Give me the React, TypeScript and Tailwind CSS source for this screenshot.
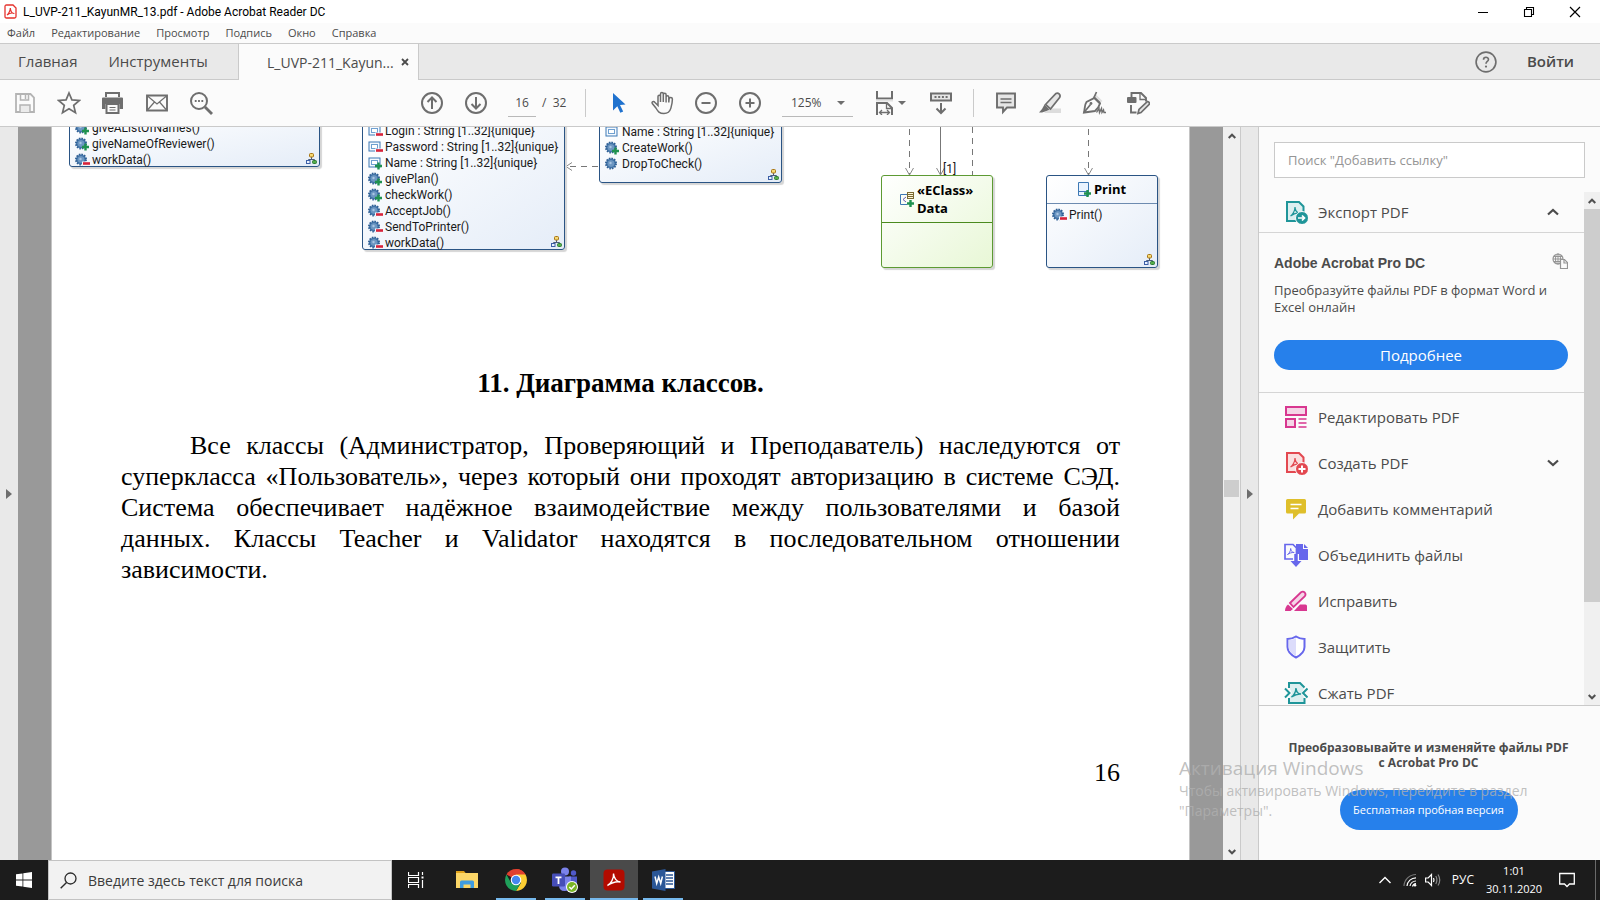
import type { ReactNode } from "react";

const uiFont = "font-['Open_Sans','Noto_Sans',sans-serif]";

type IconProps = { children: ReactNode; size?: string; box?: string };

function Icon({ children, size = "size-6", box = "0 0 24 24" }: IconProps) {
  return (
    <svg
      className={`shrink-0 ${size}`}
      viewBox={box}
      fill="none"
      stroke="currentColor"
      strokeWidth="2"
      aria-hidden="true"
    >
      {children}
    </svg>
  );
}

function TitleBar() {
  return (
    <header className="flex h-[23px] shrink-0 items-center bg-white pl-1 text-black">
      <Icon size="h-[15px] w-[13px]" box="0 0 13 15">
        <path d="M1 2.500Q1 1 2.500 1H9l3 3v8.500q0 1.500-1.500 1.500h-8Q1 14 1 12.500z" fill="#fff" stroke="#e5322d" strokeWidth="1.300" />
        <path d="M3 11c1.500-1 3.500-4.500 3.300-7 .3 3 2 5.500 4 5.500C8 8.500 5 9.500 3 11z" stroke="#e5322d" strokeWidth="1.200" />
      </Icon>
      <h1 className="ml-1.5 font-['Roboto','Open_Sans',sans-serif] text-[12px]">L_UVP-211_KayunMR_13.pdf - Adobe Acrobat Reader DC</h1>
      <div className="mr-0.5 ml-auto flex">
        <button aria-label="Свернуть" className="flex h-5 w-[46px] items-center justify-center">
          <Icon size="size-3" box="0 0 12 12"><path d="M1 6.500h10" strokeWidth="1" /></Icon>
        </button>
        <button aria-label="Восстановить" className="flex h-5 w-[46px] items-center justify-center">
          <Icon size="size-3" box="0 0 12 12">
            <path d="M1.500 3.500h7v7h-7zM3.500 3.500v-2h7v7h-2" strokeWidth="1.100" />
          </Icon>
        </button>
        <button aria-label="Закрыть" className="flex h-5 w-[46px] items-center justify-center">
          <Icon size="size-3" box="0 0 12 12"><path d="M1 1l10 10M11 1L1 11" strokeWidth="1.200" /></Icon>
        </button>
      </div>
    </header>
  );
}

function MenuBar() {
  return (
    <nav className="flex h-[21px] shrink-0 items-center gap-4 border-b border-[#cacaca] bg-[#fbfbfb] pl-[7px] text-[11px] text-[#4b4b4b]">
      {["Файл", "Редактирование", "Просмотр", "Подпись", "Окно", "Справка"].map((item) => (
        <button key={item}>{item}</button>
      ))}
    </nav>
  );
}

function TabBar() {
  return (
    <div className="flex h-9 shrink-0 bg-[#e9e9e9] text-[15px] text-[#4b4b4b]">
      <div className="flex w-[239px] items-center gap-[31px] border-r border-b border-[#cacaca] pl-[18px]">
        <button>Главная</button>
        <button>Инструменты</button>
      </div>
      <div className="flex w-[179px] items-center bg-[#fbfbfb] pl-7">
        <button className="w-[124px] text-left text-[14px] whitespace-nowrap">L_UVP-211_Kayun...</button>
        <button aria-label="Закрыть вкладку" className="ml-2.5">
          <Icon size="size-2" box="0 0 8 8"><path d="M1 1l6 6M7 1L1 7" strokeWidth="1.800" /></Icon>
        </button>
      </div>
      <div className="flex flex-1 items-center justify-end gap-[30px] border-b border-l border-[#cacaca] pr-[26px]">
        <button aria-label="Справка" className="text-[#6e6e6e]">
          <Icon size="size-[22px]">
            <circle cx="12" cy="12" r="10.800" strokeWidth="1.800" />
            <path d="M9.300 9.500c0-3.600 5.400-3.400 5.400-.3 0 2.200-2.700 2.200-2.700 4.600" strokeWidth="1.800" />
            <circle cx="12" cy="17" r="1.200" fill="currentColor" stroke="none" />
          </Icon>
        </button>
        <button className="font-semibold">Войти</button>
      </div>
    </div>
  );
}

function ToolButton({ label, children }: { label: string; children: ReactNode }) {
  return (
    <button aria-label={label} className="flex h-10 w-11 items-center justify-center">
      {children}
    </button>
  );
}

function Divider() {
  return <span className="h-7 w-px bg-[#cacaca]" />;
}

function Toolbar() {
  return (
    <div className="flex h-[47px] shrink-0 items-center border-b border-[#cacaca] bg-[#fbfbfb] pl-[3px] text-[#6e6e6e]">
      <div className="flex">
        <ToolButton label="Сохранить">
          <span className="text-[#b4b4b4]">
            <Icon>
              <path d="M3 3h14.500L21 6.500V21H3z" strokeWidth="1.800" />
              <path d="M7.500 3v6h8V3M12.500 4v4" strokeWidth="1.500" />
              <path d="M7 21v-7h10v7" fill="#ebebeb" strokeWidth="1.500" />
            </Icon>
          </span>
        </ToolButton>
        <ToolButton label="Избранное">
          <Icon>
            <path d="M12 2l2.900 6.900 7.500.6-5.700 4.900 1.800 7.300L12 17.800l-6.500 3.900 1.800-7.300-5.700-4.900 7.500-.6z" strokeWidth="1.700" />
          </Icon>
        </ToolButton>
        <ToolButton label="Печать">
          <Icon>
            <path d="M5 6V2h13v4" strokeWidth="2" />
            <path d="M1 7.500q0-1 1-1h19q1 0 1 1V18h-3.500v-5H4.500v5H1z" fill="currentColor" stroke="none" />
            <path d="M5.500 13h12v9h-12z" fill="#fbfbfb" strokeWidth="2" />
            <path d="M8.500 16.500h6M8.500 19h6" strokeWidth="1.200" />
          </Icon>
        </ToolButton>
        <ToolButton label="Отправить по почте">
          <Icon>
            <path d="M2 4.500h20v15H2z" strokeWidth="1.900" />
            <path d="M2.500 5l9.500 8 9.500-8M2.500 19l7-8M21.500 19l-7-8" strokeWidth="1.200" />
          </Icon>
        </ToolButton>
        <ToolButton label="Найти">
          <Icon>
            <circle cx="10" cy="10" r="8" />
            <path d="M16 16l7 7" strokeWidth="2.800" />
            <path d="M5.800 10h1.800M9.100 10h1.800M12.400 10h1.800" />
          </Icon>
        </ToolButton>
      </div>
      <div className="ml-[187px] flex items-center">
        <ToolButton label="Предыдущая страница">
          <Icon>
            <circle cx="12" cy="12" r="10" />
            <path d="M12 18V7M7.500 11L12 6.500l4.500 4.500" />
          </Icon>
        </ToolButton>
        <ToolButton label="Следующая страница">
          <Icon>
            <circle cx="12" cy="12" r="10" />
            <path d="M12 6v11M7.500 13l4.500 4.500 4.500-4.500" />
          </Icon>
        </ToolButton>
        <input
          aria-label="Номер страницы"
          defaultValue="16"
          className="ml-2.5 h-7 w-7 border-b border-[#b9b9b9] bg-transparent text-center text-[12px] text-[#4b4b4b]"
        />
        <span className="ml-1.5 w-[43px] text-[12px] whitespace-pre text-[#4b4b4b]">/  32</span>
        <Divider />
        <div className="ml-2.5 flex">
          <ToolButton label="Выделение">
            <Icon>
              <path d="M7 2l12.500 11.500-5.500.4 3.200 6.600-2.900 1.300-3-6.600L7 19.500z" fill="#2072ce" stroke="none" />
            </Icon>
          </ToolButton>
          <ToolButton label="Рука">
            <Icon>
              <path d="M8 14.500V5.500q0-1.300 1.200-1.300t1.300 1.300V11 3q0-1.500 1.400-1.500T13.300 3v8V3.700q0-1.400 1.400-1.400t1.400 1.400V11.500 6q0-1.300 1.300-1.300T18.800 6v5.500l.3-3.700q.2-1.300 1.700-1.200t1.600 1.500c0 4-.7 6.400-1.500 9-1 3.400-3.200 5.400-7 5.400-4.500 0-6-2-8-5.500L2.300 12.500q-.7-1.300.5-1.800 1.200-.4 2.200.7z" strokeWidth="1.500" />
            </Icon>
          </ToolButton>
          <ToolButton label="Уменьшить">
            <Icon>
              <circle cx="12" cy="12" r="10" />
              <path d="M7.500 12h9" />
            </Icon>
          </ToolButton>
          <ToolButton label="Увеличить">
            <Icon>
              <circle cx="12" cy="12" r="10" />
              <path d="M7.500 12h9M12 7.500v9" />
            </Icon>
          </ToolButton>
        </div>
        <div className="ml-2.5 flex h-7 w-[71px] items-center border-b border-[#b9b9b9]">
          <select aria-label="Масштаб" className="w-[55px] appearance-none pl-[9px] text-[12px] text-[#4b4b4b]">
            <option>125%</option>
          </select>
          <Icon size="h-1 w-2" box="0 0 8 4"><path d="M0 0h8L4 4z" fill="currentColor" stroke="none" /></Icon>
        </div>
        <button aria-label="По ширине страницы" className="ml-[19px] flex w-9 items-center gap-0.5">
          <Icon>
            <path d="M5 0v7.500h15V0" strokeWidth="2" />
            <path d="M4 8.500h17v2H4z" fill="#e2e2e2" stroke="none" />
            <path d="M5 24V12h10l5 5v7" strokeWidth="2" />
            <path d="M14.500 12v5.500H20" strokeWidth="1.300" />
            <path d="M7.500 21.500h10M10 19l-2.500 2.500L10 24M15 19l2.500 2.500L15 24" strokeWidth="1.300" />
          </Icon>
          <Icon size="h-1 w-2" box="0 0 8 4"><path d="M0 0h8L4 4z" fill="currentColor" stroke="none" /></Icon>
        </button>
        <div className="ml-[11px]">
          <ToolButton label="Режим чтения">
            <Icon>
              <path d="M2 2.500h20v7H2z" fill="#e6e6e6" />
              <path d="M5.500 6h2M9.200 6h2M12.900 6h2M16.600 6h2M12 12v10M7.500 17.500l4.500 4.500 4.500-4.500" />
            </Icon>
          </ToolButton>
        </div>
        <span className="w-2.5" />
        <Divider />
        <div className="ml-2.5 flex">
          <ToolButton label="Комментарий">
            <Icon>
              <path d="M3 2.500h18v14h-8l-4 4.500v-4.500H3z" fill="#e6e6e6" strokeWidth="1.900" />
              <path d="M6.500 8h11M6.500 11.500h11" strokeWidth="1.500" />
            </Icon>
          </ToolButton>
          <ToolButton label="Маркер">
            <Icon>
              <path d="M12 17.500h11V22H6z" fill="#dcdcdc" stroke="none" />
              <path d="M7.500 13.500L17.500 2.800q2-1.300 3.600 0 1.700 1.500.5 3.800L12.500 18z" fill="#e6e6e6" strokeWidth="1.700" />
              <path d="M6.500 13.500l5 5-3 1.500-4.500 1.500H1l3-3.500z" fill="currentColor" stroke="none" />
            </Icon>
          </ToolButton>
          <ToolButton label="Подписать">
            <Icon>
              <path d="M13.500 3l7 7-3 2.500-7-6.500z" fill="#e0e0e0" stroke="none" />
              <path d="M2 21.500C3 17.500 2.500 13.500 4.500 11l8-4 5.500 5.500c-1 3.500-2.500 5.500-5 7.500z" strokeWidth="1.900" />
              <path d="M14.500 1l-2.500 5.500 6 5.500M2 21.500l6.500-8" strokeWidth="1.700" />
              <circle cx="9" cy="12.500" r="1.400" fill="currentColor" stroke="none" />
              <path d="M14.500 21.500l2.500-4 .5 4 2-4 .5 4 1.500-2.500.5 2.500h2" strokeWidth="1.400" />
            </Icon>
          </ToolButton>
          <ToolButton label="Дополнительные инструменты">
            <Icon>
              <path d="M5.500 7V2h9.500l5 5v3.500M5 14v7.500h5.500" strokeWidth="1.900" />
              <path d="M14 2v6.500h6" strokeWidth="1.300" />
              <rect x="1" y="6" width="9.500" height="6" rx="1" fill="currentColor" stroke="none" />
              <path d="M12 22.500l1-4 8.500-8q2 .5 2 2.500L15 21.500z" fill="#e6e6e6" strokeWidth="1.700" />
            </Icon>
          </ToolButton>
        </div>
      </div>
    </div>
  );
}

type Member = { kind: "attr" | "op"; badge?: "plus" | "minus"; text: string };

function MemberIcon({ kind, badge }: { kind: "attr" | "op"; badge?: "plus" | "minus" }) {
  return (
    <svg className="h-[14px] w-[15px] shrink-0" viewBox="0 0 15 14" fill="none" aria-hidden="true">
      {kind === "op" ? (
        <>
          <circle cx="6" cy="6.500" r="5" fill="#5b87b5" stroke="#2f5f94" strokeWidth="2" strokeDasharray="1.500 1.100" />
          <circle cx="6" cy="6.500" r="4" fill="#6d97c2" stroke="#34689f" strokeWidth="0.800" />
          <circle cx="5.500" cy="6" r="1.200" fill="#a9c6e3" />
        </>
      ) : (
        <>
          <rect x="1" y="2" width="11" height="9" fill="#f4f9ff" stroke="#3d78b4" />
          <rect x="3.500" y="4.500" width="6" height="4" fill="#fff" stroke="#6fa0d0" />
        </>
      )}
      {badge === "plus" && <path d="M10.500 6.500v7M7 10h7" stroke="#1f9150" strokeWidth="2.400" />}
      {badge === "minus" && (
        <>
          <path d="M7 8.500h8v4H7z" fill="#f6f9ff" />
          <path d="M8 10.500h7" stroke="#d8233a" strokeWidth="2.600" />
        </>
      )}
    </svg>
  );
}

function NodeCorner() {
  return (
    <svg className="absolute right-0.5 bottom-0.5 size-[11px]" viewBox="0 0 11 11" fill="none" aria-hidden="true">
      <path d="M5.500 4v2.500M2.500 8V6.500h6V8" stroke="#4a5c7a" />
      <rect x="3.500" y="0.500" width="4" height="3.500" rx="1" fill="#f5d873" stroke="#a87514" />
      <rect x="0.500" y="7.500" width="3.500" height="3" fill="#eaf2ff" stroke="#3c5fa6" />
      <rect x="6.500" y="7.500" width="4" height="3" rx="1" fill="#55ad4a" stroke="#2c7a35" />
    </svg>
  );
}

function Members({ items }: { items: Member[] }) {
  return (
    <ul className="flex flex-col">
      {items.map((m) => (
        <li key={m.text} className="flex h-4 items-center gap-0.5 whitespace-nowrap">
          <MemberIcon kind={m.kind} badge={m.badge} />
          {m.text}
        </li>
      ))}
    </ul>
  );
}

const blueNode =
  "absolute flex flex-col rounded-b-[3px] border border-[#2a5484] bg-linear-to-br from-white to-[#e5edf8] pl-[5px] shadow-[2px_2px_1px_#d5d5d5]";

function ClassDiagram() {
  return (
    <figure
      aria-label="Диаграмма классов"
      className="relative -ml-px h-[160px] overflow-hidden font-['Roboto','Open_Sans',sans-serif] text-[12px] text-[#1a1a1a]"
    >
      <svg className="absolute top-0 left-0 h-[160px] w-[1137px]" viewBox="0 0 1137 160" fill="none" stroke="#777" aria-hidden="true">
        <path d="M889.500 0v48" />
        <path d="M858.500 2v46M921.500 0v48M1037.500 2v46M547 39.500H516" strokeDasharray="6 5" />
        <path d="M854.500 41l4 7 4-7M885.500 41l4 7 4-7M1033.500 41l4 7 4-7M521 35.500l-6 4 6 4" stroke="#888" />
      </svg>
      <div className={`${blueNode} -top-2 left-[18px] h-12 w-[251px]`}>
        <Members
          items={[
            { kind: "op", badge: "plus", text: "giveAListOfNames()" },
            { kind: "op", badge: "plus", text: "giveNameOfReviewer()" },
            { kind: "op", badge: "minus", text: "workData()" },
          ]}
        />
        <NodeCorner />
      </div>
      <div className={`${blueNode} -top-[5px] left-[311px] h-32 w-[203px]`}>
        <Members
          items={[
            { kind: "attr", badge: "minus", text: "Login : String [1..32]{unique}" },
            { kind: "attr", badge: "minus", text: "Password : String [1..32]{unique}" },
            { kind: "attr", badge: "plus", text: "Name : String [1..32]{unique}" },
            { kind: "op", badge: "plus", text: "givePlan()" },
            { kind: "op", badge: "plus", text: "checkWork()" },
            { kind: "op", badge: "minus", text: "AcceptJob()" },
            { kind: "op", badge: "minus", text: "SendToPrinter()" },
            { kind: "op", badge: "minus", text: "workData()" },
          ]}
        />
        <NodeCorner />
      </div>
      <div className={`${blueNode} -top-1 left-[548px] h-[60px] w-[183px]`}>
        <Members
          items={[
            { kind: "attr", text: "Name : String [1..32]{unique}" },
            { kind: "op", badge: "plus", text: "CreateWork()" },
            { kind: "op", text: "DropToCheck()" },
          ]}
        />
        <NodeCorner />
      </div>
      <span className="absolute top-[34px] left-[892px] leading-4">[1]</span>
      <div className="absolute top-12 left-[830px] flex h-[93px] w-[112px] flex-col rounded-[3px] border border-[#5d9a33] bg-linear-to-br from-white to-[#e8f7d6] shadow-[2px_2px_1px_#d5d5d5]">
        <div className="flex h-[47px] items-center gap-[3px] border-b border-[#4a8a1e] pl-[18px] font-['Open_Sans',sans-serif] text-[13px] leading-[18px] font-bold text-black">
          <svg className="h-4 w-[14px] shrink-0" viewBox="0 0 14 16" fill="none" aria-hidden="true">
            <path d="M7 3.500H.5v10H7" stroke="#3d78b4" />
            <path d="M6 6L3 8.500 6 11" stroke="#6b5db0" />
            <rect x="7.500" y="1.500" width="6" height="6" fill="#fff8dc" stroke="#7a6a32" />
            <path d="M8 3.500h5M8 5.500h5" stroke="#7a6a32" />
            <path d="M10.500 9v7M7 12.500h7" stroke="#1f9150" strokeWidth="2.400" />
          </svg>
          <p>«EClass»<br />Data</p>
        </div>
      </div>
      <div className="absolute top-12 left-[995px] flex h-[93px] w-[112px] flex-col rounded-[3px] border border-[#2a5484] bg-linear-to-br from-white to-[#e5edf8] shadow-[2px_2px_1px_#d5d5d5]">
        <div className="flex h-7 items-center justify-center gap-[3px] border-b border-[#6d8bb0] pr-px font-['Open_Sans',sans-serif] text-[13px] font-bold text-black">
          <svg className="h-[15px] w-[14px] shrink-0" viewBox="0 0 14 15" fill="none" aria-hidden="true">
            <path d="M1.500.5h10v13h-10zM1.500 9.500h10" fill="#e9f3ff" stroke="#3d78b4" />
            <path d="M10.500 8v7M7 11.500h7" stroke="#1f9150" strokeWidth="2.400" />
          </svg>
          Print
        </div>
        <div className="pt-[3px] pl-[5px]">
          <Members items={[{ kind: "op", badge: "minus", text: "Print()" }]} />
        </div>
        <NodeCorner />
      </div>
    </figure>
  );
}

const bodyLines = [
  "суперкласса «Пользователь», через который они проходят авторизацию в системе СЭД.",
  "Система обеспечивает надёжное взаимодействие между пользователями и базой",
  "данных. Классы Teacher и Validator находятся в последовательном отношении",
];

function DocumentPage() {
  return (
    <article className="mx-[33px] min-w-0 flex-1 border-x border-[#c4c4c4] bg-white">
      <ClassDiagram />
      <div className="pr-[69px] pl-[69px] font-['Liberation_Serif',serif] text-[26px] leading-[31px] text-black">
        <h2 className="mt-[81px] text-center text-[27px] font-bold">11. Диаграмма классов.</h2>
        <div className="mt-[31px] whitespace-nowrap [text-align-last:justify]">
          <p className="pl-[69px]">Все классы (Администратор, Проверяющий и Преподаватель) наследуются от</p>
          {bodyLines.map((line) => (
            <p key={line}>{line}</p>
          ))}
        </div>
        <p>зависимости.</p>
        <p className="mt-[172px] text-right">16</p>
      </div>
    </article>
  );
}

function ScrollArrow({ up = false }: { up?: boolean }) {
  return (
    <button aria-label={up ? "Прокрутить вверх" : "Прокрутить вниз"} className="flex h-[17px] w-full items-center justify-center text-[#505050]">
      <Icon size="h-1.5 w-2" box="0 0 8 6">
        <path d={up ? "M.7 5L4 1.700 7.300 5" : "M.7 1L4 4.300 7.300 1"} />
      </Icon>
    </button>
  );
}

function DocumentScrollbar() {
  return (
    <div className="flex w-[17px] shrink-0 flex-col bg-[#f0f0f0] px-px">
      <ScrollArrow up />
      <div className="h-[336px]" />
      <div className="h-[17px] bg-[#cdcdcd]" />
      <div className="flex-1" />
      <ScrollArrow />
    </div>
  );
}

function PdfGlyph({ tint, children }: { tint: string; children?: ReactNode }) {
  return (
    <>
      <path d="M3 2h12l4.500 4.500V21H3z" fill={tint} />
      <path d="M6.500 16c2-1 4.500-5 4.500-9 .2 3.500 2 6 5 6-4-.5-6.500 1-9.500 3z" strokeWidth="1.200" />
      {children}
    </>
  );
}

const tools: { label: string; color: string; icon: ReactNode; chevron?: boolean }[] = [
  {
    label: "Редактировать PDF",
    color: "text-[#d83790]",
    icon: (
      <>
        <path d="M2 2h20v8H2zM2 14h9v8H2z" fill="#f5d5e7" />
        <path d="M14.500 14h8M14.500 18h8M14.500 22h8" strokeWidth="1.300" />
      </>
    ),
  },
  {
    label: "Создать PDF",
    color: "text-[#e34850]",
    chevron: true,
    icon: (
      <PdfGlyph tint="#fae0e0">
        <circle cx="18" cy="18" r="6.500" fill="currentColor" stroke="#fbfbfb" strokeWidth="1" />
        <path d="M14.500 18h7M18 14.500v7" stroke="#fff" />
      </PdfGlyph>
    ),
  },
  {
    label: "Добавить комментарий",
    color: "text-[#dfbf2b]",
    icon: (
      <>
        <path d="M3.500 2h17q1.500 0 1.500 1.500v11.500q0 1.500-1.500 1.500H15L9 22.500v-6H3.500Q2 16.500 2 15V3.500Q2 2 3.500 2z" fill="currentColor" stroke="none" />
        <path d="M6.500 7.500h11M6.500 11.500h8" stroke="#fff" strokeWidth="1.700" />
      </>
    ),
  },
  {
    label: "Объединить файлы",
    color: "text-[#6767ec]",
    icon: (
      <>
        <path d="M12 1h7v5h5v11H12z" fill="currentColor" stroke="none" />
        <path d="M20 1l4 4h-4z" fill="currentColor" stroke="none" />
        <path d="M1 1.500h8L12.500 5v11H1z" fill="#fbfbfb" strokeWidth="1.700" />
        <path d="M3.500 11.500c1.500-.7 3.200-3.500 3.200-6 .2 2.500 1.300 3.800 3.500 4-2.500-.2-4.700.6-6.700 2z" strokeWidth="1" />
        <path d="M12 11v8" stroke="#fbfbfb" strokeWidth="6" />
        <path d="M12 11v8" strokeWidth="3.500" />
        <path d="M6.500 18h11L12 24z" fill="currentColor" stroke="none" />
      </>
    ),
  },
  {
    label: "Исправить",
    color: "text-[#d83790]",
    icon: (
      <>
        <path d="M16 15.500h5.500q1.500 0 1.500 1.500v5H10z" fill="currentColor" stroke="none" />
        <path d="M6 14L17 3.300q2-1.300 3.700.2 1.500 1.600.2 3.600L9.500 18z" fill="#f5d5e7" strokeWidth="1.800" />
        <path d="M4 15.500l5 4.500-2.500 2H1q0-4 3-6.500z" fill="currentColor" stroke="none" />
      </>
    ),
  },
  {
    label: "Защитить",
    color: "text-[#6767ec]",
    icon: (
      <>
        <path d="M12 1.500c3 2 5.500 2.500 8.500 2.500v8c0 5.500-4.500 8.500-8.500 10.500C8 20.500 3.500 17.500 3.500 12V4c3 0 5.500-.5 8.500-2.500z" fill="#fff" />
        <path d="M12 3v18c-4-2-7.300-4.800-7.300-9V5c3 0 5-.5 7.300-2z" fill="#dcdcfb" stroke="none" />
      </>
    ),
  },
  {
    label: "Сжать PDF",
    color: "text-[#1f9599]",
    icon: (
      <>
        <path d="M5 2h11.500l4 4-3 6 3 5.500V22H5v-4.500l3-5.500-3-6z" fill="#dceff0" stroke="none" />
        <path d="M5 7V2h11l4.500 4.500M5 17v5h15.500v-5" strokeWidth="2" />
        <path d="M1 7.500L5.500 12 1 16.500M23.500 7.500L19 12l4.500 4.500" />
        <path d="M7.500 16c2-1 4.500-5 4.500-9 .2 3.500 2 6 5 6-4-.5-6.500 1-9.500 3z" strokeWidth="1.500" />
      </>
    ),
  },
];

function Chevron({ up = false }: { up?: boolean }) {
  return (
    <Icon size="h-2 w-3" box="0 0 12 8">
      <path d={up ? "M1 6.500l5-4.500 5 4.500" : "M1 1.500L6 6l5-4.500"} strokeWidth="2.200" />
    </Icon>
  );
}

function ToolsPanel() {
  return (
    <aside className="flex w-[342px] shrink-0 flex-col border-l border-[#cacaca] bg-[#fbfbfb] text-[#4b4b4b]">
      <div className="pt-[15px] pr-[15px] pb-3.5 pl-[15px]">
        <input
          aria-label="Поиск"
          placeholder={'Поиск "Добавить ссылку"'}
          className="h-[36px] w-full border border-[#cacaca] bg-white px-[13px] text-[13px] placeholder:text-[#959595]"
        />
      </div>
      <div className="flex min-h-0 flex-1 border-b border-[#cacaca]">
        <div className="flex min-w-0 flex-1 flex-col overflow-hidden">
          <button className="flex h-[41px] shrink-0 items-center border-b border-[#d5d5d5] pr-[25px] pl-[25px] text-[15px]">
            <span className="text-[#1f9599]">
              <Icon>
                <PdfGlyph tint="#dceff0">
                  <circle cx="18" cy="18" r="6.500" fill="currentColor" stroke="#fbfbfb" strokeWidth="1" />
                  <path d="M14 18h6M18 15.500l2.500 2.500-2.500 2.500" stroke="#fff" strokeWidth="1.700" />
                </PdfGlyph>
              </Icon>
            </span>
            <span className="mr-auto ml-2.5">Экспорт PDF</span>
            <Chevron up />
          </button>
          <section className="flex h-[160px] shrink-0 flex-col border-b border-[#d5d5d5] pt-5 pr-4 pl-[15px]">
            <div className="flex justify-between">
              <h2 className="font-['Liberation_Sans',sans-serif] text-[14px] leading-5 font-bold">Adobe Acrobat Pro DC</h2>
              <span className="text-[#959595]">
                <Icon size="size-4" box="0 0 16 16">
                  <circle cx="6" cy="6" r="5" strokeWidth="1.200" />
                  <path d="M1 6h10M6 1v10M2 3.500h8M2 8.500h8" strokeWidth="1" />
                  <ellipse cx="6" cy="6" rx="2.500" ry="5" strokeWidth="1" />
                  <path d="M8.500 6.500h4l3 3v6h-7z" fill="#fbfbfb" strokeWidth="1.200" />
                  <path d="M12 6.500V10h3.500" strokeWidth="1.200" />
                </Icon>
              </span>
            </div>
            <p className="mt-[9px] text-[13px] leading-[17px]">Преобразуйте файлы PDF в формат Word и Excel онлайн</p>
            <button className="mt-6 h-[30px] shrink-0 rounded-full bg-[#2680eb] text-[15px] text-white">Подробнее</button>
          </section>
          <div className="flex flex-col pt-px">
            {tools.map((t) => (
              <button key={t.label} className="flex h-[46px] shrink-0 items-center pr-[25px] pl-[25px] text-[15px]">
                <span className={t.color}>
                  <Icon>{t.icon}</Icon>
                </span>
                <span className="mr-auto ml-2.5">{t.label}</span>
                {t.chevron && <Chevron />}
              </button>
            ))}
          </div>
        </div>
        <div className="flex w-4 shrink-0 flex-col bg-[#f0f0f0]">
          <ScrollArrow up />
          <div className="h-[393px] bg-[#cdcdcd]" />
          <div className="flex-1" />
          <ScrollArrow />
        </div>
      </div>
      <div className="flex h-[154px] shrink-0 flex-col items-center pt-[34px] pr-0.5">
        <p className="text-center text-[12px] leading-[15px] font-bold">
          Преобразовывайте и изменяйте файлы PDF
          <br />с Acrobat Pro DC
        </p>
        <button className="mt-5 h-10 w-[178px] rounded-full bg-[#2680eb] text-[11px] text-white">
          Бесплатная пробная версия
        </button>
      </div>
    </aside>
  );
}

function SideHandle({ narrow = false }: { narrow?: boolean }) {
  return (
    <button
      aria-label="Показать панель"
      className={`flex shrink-0 items-center justify-center bg-[#e9e9e9] text-[#6e6e6e] ${narrow ? "w-[17px]" : "w-[18px]"}`}
    >
      <Icon size="h-2.5 w-1.5" box="0 0 6 10"><path d="M0 0l6 5-6 5z" fill="currentColor" stroke="none" /></Icon>
    </button>
  );
}

function TaskButton({ label, state, children }: { label: string; state?: "open" | "active"; children: ReactNode }) {
  const tone = state === "active" ? "bg-[#4a4a4a]" : "";
  return (
    <button aria-label={label} className={`flex h-10 w-12 flex-col items-center ${tone}`}>
      <span className="flex h-[38px] items-center pt-0.5">{children}</span>
      {state && <span className={state === "active" ? "h-0.5 w-12 bg-[#76b9ed]" : "h-0.5 w-10 bg-[#76b9ed]"} />}
    </button>
  );
}

function Taskbar() {
  return (
    <footer className="flex h-10 shrink-0 items-center bg-[#1c1c1c] text-white">
      <button aria-label="Пуск" className="flex w-12 justify-center">
        <Icon size="size-4" box="0 0 16 16">
          <path d="M0 2.300l6.500-.9v6.200H0zM7.300 1.300L16 0v7.600H7.300zM0 8.400h6.500v6.200L0 13.700zM7.300 8.400H16V16l-8.700-1.200z" fill="#fff" stroke="none" />
        </Icon>
      </button>
      <label className="flex h-10 w-[344px] items-center border border-[#c3c3c3] bg-[#f2f2f2] pl-[11px] text-[#2b2b2b]">
        <Icon size="size-[17px]" box="0 0 17 17">
          <circle cx="10.500" cy="6.500" r="5.500" strokeWidth="1.300" />
          <path d="M6.500 10.500L.7 16.300" strokeWidth="1.400" />
        </Icon>
        <input
          aria-label="Поиск в Windows"
          placeholder="Введите здесь текст для поиска"
          className="ml-[11px] min-w-0 flex-1 bg-transparent text-[14px] placeholder:text-[#3b3b3b]"
        />
      </label>
      <div className="flex gap-px">
        <TaskButton label="Представление задач">
          <Icon size="size-4" box="0 0 16 16">
            <path d="M.500 0v3.500h10V0M.500 5.500h10v5H.500zM.500 16v-3.500h10V16M14.500 0v3M14.500 8v8" strokeWidth="1.200" />
            <path d="M13.500 4.500h2v2h-2z" fill="#fff" stroke="none" />
          </Icon>
        </TaskButton>
        <span className="w-px" />
        <TaskButton label="Проводник">
          <Icon size="size-[22px]" box="0 0 22 22">
            <path d="M0 2h8l2 2.500H0z" fill="#e0a21b" stroke="none" />
            <path d="M0 4h22v15H0z" fill="#fbd667" stroke="none" />
            <path d="M4 19v-6q0-1.500 1.500-1.500h11Q18 11.500 18 13v6h-3.500v-3.500h-7V19z" fill="#3f9ce0" stroke="none" />
          </Icon>
        </TaskButton>
        <TaskButton label="Chrome" state="open">
          <Icon size="size-[22px]" box="0 0 22 22">
            <g stroke="none">
              <path d="M11 11L1.500 5.500A11 11 0 0 1 20.500 5.500z" fill="#e0402f" />
              <path d="M11 0A11 11 0 0 1 20.500 5.500H11z" fill="#e0402f" />
              <path d="M20.500 5.500A11 11 0 0 1 11 22l5-8.200L11 5.500z" fill="#fdcf33" />
              <path d="M1.500 5.500A11 11 0 0 0 11 22l4.700-8.200L6 13.800z" fill="#1fa05a" />
              <circle cx="11" cy="11" r="5.300" fill="#fff" />
              <circle cx="11" cy="11" r="4.200" fill="#4587f0" />
            </g>
          </Icon>
        </TaskButton>
        <TaskButton label="Teams" state="open">
          <Icon size="size-[26px]" box="0 0 26 26">
            <g stroke="none">
              <circle cx="13" cy="4.500" r="4" fill="#7b83eb" />
              <circle cx="21.500" cy="6" r="2.700" fill="#5059c9" />
              <path d="M17 9.500h8v8q-1 3-4 3h-4z" fill="#5059c9" />
              <path d="M7 9.500h12V18q-1 6-6.500 6T7 18z" fill="#7b83eb" />
              <rect x="0" y="6.500" width="13" height="13" rx="1.200" fill="#464eb8" />
              <path d="M3.500 9.500h6v1.700H7.400V17H5.600v-5.800H3.500z" fill="#fff" />
              <circle cx="20" cy="20" r="6" fill="#fff" />
              <circle cx="20" cy="20" r="5" fill="#7ab527" />
            </g>
            <path d="M17.300 20l2 2 3.500-3.800" stroke="#fff" strokeWidth="1.500" />
          </Icon>
        </TaskButton>
        <TaskButton label="Acrobat Reader" state="active">
          <Icon size="size-[22px]" box="0 0 22 22">
            <rect x="0.500" y="0.500" width="21" height="21" rx="4" fill="#b30b00" stroke="none" />
            <path d="M4.500 16.500c3-1.500 6.700-7 6-12 .3 4.500 3 8.300 7 8.500-4.500-1-8.500.5-13 3.500z" stroke="#fff" strokeWidth="1.400" />
          </Icon>
        </TaskButton>
        <TaskButton label="Word" state="open">
          <Icon size="h-[22px] w-[23px]" box="0 0 23 22">
            <path d="M12 2.500h10.500v17H12z" fill="#fff" stroke="#2b5797" strokeWidth="1" />
            <path d="M14 6h7M14 9h7M14 12h7M14 15h7" stroke="#2b5797" strokeWidth="1.300" />
            <path d="M0 2.500L13.500 0v22L0 19.500z" fill="#2b5797" stroke="none" />
            <path d="M3 7.500l1.700 7 2-6.500 2 6.500 1.700-7" stroke="#fff" strokeWidth="1.500" />
          </Icon>
        </TaskButton>
      </div>
      <div className="ml-auto flex items-center text-[12px]">
        <button aria-label="Скрытые значки">
          <Icon size="h-2 w-3" box="0 0 12 8"><path d="M.5 7L6 1.500 11.500 7" strokeWidth="1.400" /></Icon>
        </button>
        <button aria-label="Сеть" className="ml-3">
          <Icon size="size-[14px]" box="0 0 14 14">
            <path d="M1 13A12 12 0 0 1 13 1.500" stroke="#777" strokeWidth="1.200" />
            <path d="M4 13A9 9 0 0 1 13 4.800M7 13a6 6 0 0 1 6-5M9.500 13.500a4 4 0 0 1 3.500-3" strokeWidth="1.200" />
            <circle cx="12" cy="12.300" r="1.300" fill="#fff" stroke="none" />
          </Icon>
        </button>
        <button aria-label="Громкость" className="ml-2">
          <Icon size="h-[14px] w-4" box="0 0 16 14">
            <path d="M.6 5h2.600L6.500 1.500v11L3.200 9H.6z" strokeWidth="1.200" />
            <path d="M8.500 5q1 2 0 4" strokeWidth="1.200" />
            <path d="M10.800 3q2.200 4 0 8M13 1.500q3.500 5.500 0 11" stroke="#8a8a8a" strokeWidth="1.200" />
          </Icon>
        </button>
        <button className="ml-[11px]">РУС</button>
        <p className="ml-[11px] w-[58px] text-center text-[11px] leading-[18px] whitespace-nowrap">
          1:01
          <br />
          30.11.2020
        </p>
        <button aria-label="Уведомления" className="ml-4">
          <Icon size="size-4" box="0 0 16 16">
            <path d="M.7 1.500h14.600V12H10.500L8 14.500 5.500 12H.7z" strokeWidth="1.300" />
          </Icon>
        </button>
        <span className="mr-1 ml-5 h-10 w-px bg-[#6a6a6a]" />
      </div>
    </footer>
  );
}

export default function App() {
  return (
    <div className={`relative flex h-screen flex-col overflow-hidden ${uiFont}`}>
      <TitleBar />
      <MenuBar />
      <TabBar />
      <Toolbar />
      <main className="flex min-h-0 flex-1 overflow-hidden">
        <SideHandle />
        <div className="flex min-w-0 flex-1 overflow-hidden bg-[#999]">
          <DocumentPage />
        </div>
        <DocumentScrollbar />
        <div className="flex border-l border-[#cacaca]">
          <SideHandle narrow />
        </div>
        <ToolsPanel />
      </main>
      <Taskbar />
      <div className="pointer-events-none absolute right-14 bottom-[79px] w-[365px] text-[14px] leading-5 text-[#b0b0b0]/80">
        <p className="text-[19px] leading-[26px]">Активация Windows</p>
        <p>Чтобы активировать Windows, перейдите в раздел "Параметры".</p>
      </div>
    </div>
  );
}
